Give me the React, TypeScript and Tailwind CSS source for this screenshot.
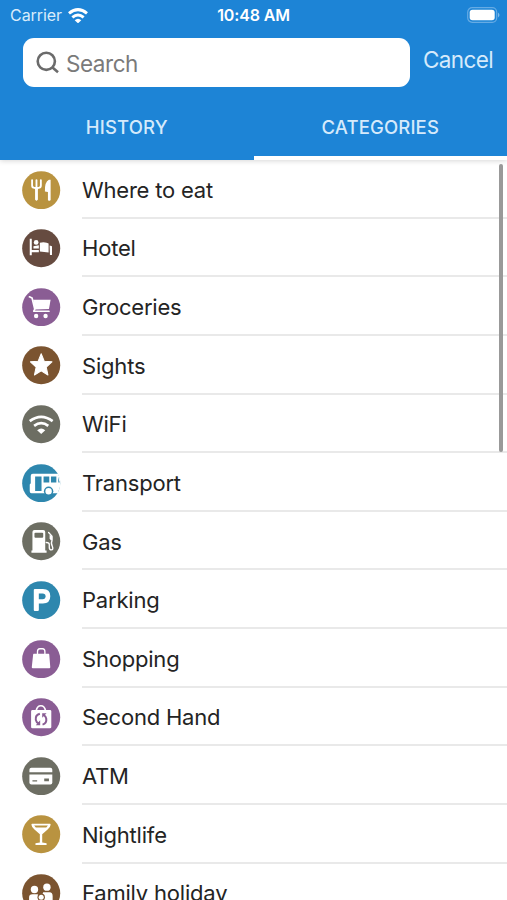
import { useState } from 'react'
import type { ReactNode } from 'react'
import clsx from 'clsx'

interface Category {
  id: string
  label: string
  color: string
  glyph: ReactNode
}

// Glyphs share a 114 x 114 box, the badge circle fills it
const CATEGORIES: Category[] = [
  {
    id: 'eat',
    label: 'Where to eat',
    color: 'text-[#b99340]',
    glyph: (
      <>
        <path d="M30 27v16q0 7 7 7h12q7 0 7-7V27M43 27v58" fill="none" stroke="white" strokeWidth="5.5" strokeLinecap="round" />
        <path d="M36 48h14l-3 8v29q-4 5-8 0V56z" />
        <path d="M85 26v60q-4 5-8 0V62l-9-1q-1-29 12-35z" />
      </>
    ),
  },
  {
    id: 'hotel',
    label: 'Hotel',
    color: 'text-[#664b40]',
    glyph: (
      <>
        <path d="M23 29h6v33H50v7H29v9h-6z" />
        <circle cx="42" cy="40" r="7" />
        <path d="M34 51l16-3v10H34z" />
        <path d="M53 41q11-4 20 0l6 2v27l-26-3z" />
        <path d="M82 49l7 2v26h-6z" />
      </>
    ),
  },
  {
    id: 'groceries',
    label: 'Groceries',
    color: 'text-[#8a5d94]',
    glyph: (
      <>
        <path d="M33 35h52l-5 27-42 2z" />
        <path d="M22 26l8 4 8 33-3 6h45" fill="none" stroke="white" strokeWidth="5" strokeLinecap="round" strokeLinejoin="round" />
        <circle cx="42" cy="83" r="6.5" />
        <circle cx="70" cy="83" r="6.5" />
      </>
    ),
  },
  {
    id: 'sights',
    label: 'Sights',
    color: 'text-[#7b5430]',
    glyph: (
      <path
        d="M57 23l9 22 23 2-17 16 5 23-20-12-20 12 5-23-17-16 23-2z"
        stroke="white"
        strokeWidth="3"
        strokeLinejoin="round"
      />
    ),
  },
  {
    id: 'wifi',
    label: 'WiFi',
    color: 'text-[#6d6e63]',
    glyph: (
      <>
        <path d="M23 48q34-25 68 0M36 62q21-16 42 0" fill="none" stroke="white" strokeWidth="8" />
        <path d="M45 75q12-11 24 0L57 86z" />
      </>
    ),
  },
  {
    id: 'transport',
    label: 'Transport',
    color: 'text-[#2e87ae]',
    glyph: (
      <>
        <path d="M32 29h75q7 12 7 28 0 15-8 30H28q-5 0-5-6V61l3-4V35q0-6 6-6z" />
        <g fill="currentColor">
          <path d="M39 37h19v43H39zM64 37h17v18H64zM86 37h16v18H86zM107 38l5 17h-4z" />
          <circle cx="79" cy="81" r="14" />
        </g>
        <circle cx="79" cy="81" r="9.5" />
      </>
    ),
  },
  {
    id: 'gas',
    label: 'Gas',
    color: 'text-[#6d6e63]',
    glyph: (
      <>
        <path d="M31 30q0-6 6-6h26q6 0 6 6v55h4v6H28v-6h3z" />
        <rect x="37" y="32" width="26" height="15" rx="3" fill="currentColor" />
        <path d="M79 31l10 11v14q-4 7 1 16 4 11-3 11-6 0-6-8v-8q0-6-9-6" fill="none" stroke="white" strokeWidth="4" strokeLinecap="round" strokeLinejoin="round" />
        <path d="M82 38l8 5v11h-5l-3-6z" />
      </>
    ),
  },
  {
    id: 'parking',
    label: 'Parking',
    color: 'text-[#2e87ae]',
    glyph: (
      <>
        <path d="M38 24h24q22 0 22 21T62 67H50v19q0 3-3 3h-9q-3 0-3-3V27q0-3 3-3z" />
        <path d="M50 37h11q9 0 9 8.5t-9 8.5H50z" fill="currentColor" />
      </>
    ),
  },
  {
    id: 'shopping',
    label: 'Shopping',
    color: 'text-[#8a5d94]',
    glyph: (
      <>
        <path d="M46 42v-7q0-9 7-9h8q7 0 7 9v7" fill="none" stroke="white" strokeWidth="4" />
        <path d="M35 41h44q2 0 2 3l3 37q0 3-3 3H32q-3 0-3-3l4-37q0-3 2-3z" />
      </>
    ),
  },
  {
    id: 'second-hand',
    label: 'Second Hand',
    color: 'text-[#8a5d94]',
    glyph: (
      <>
        <path d="M42 38q3-15 14-15t14 15" fill="none" stroke="white" strokeWidth="5" />
        <rect x="27" y="36" width="60" height="54" rx="4" />
        <g fill="none" stroke="currentColor" strokeWidth="6">
          <path d="M53 47q-14 4-12 18 1 7 9 11" />
          <path d="M61 79q13-4 11-18-1-7-8-11" />
        </g>
        <path d="M41 81h13V66zM73 45H60v14z" fill="currentColor" />
      </>
    ),
  },
  {
    id: 'atm',
    label: 'ATM',
    color: 'text-[#6d6e63]',
    glyph: (
      <>
        <path d="M22 45v-7q0-6 6-6h56q6 0 6 6v7z" />
        <path d="M22 52h68v24q0 6-6 6H28q-6 0-6-6z" />
        <path d="M31 69h14v4H31zM66 64h14v8H66z" fill="currentColor" />
      </>
    ),
  },
  {
    id: 'nightlife',
    label: 'Nightlife',
    color: 'text-[#b99340]',
    glyph: (
      <>
        <path d="M30 26h53q2 0 2 3 0 6-9 14L60 57v25l13 2v5H40v-5l13-2V57L37 43q-9-8-9-14 0-3 2-3z" />
        <path d="M36 31h41l-5 6H41z" fill="currentColor" />
      </>
    ),
  },
  {
    id: 'family',
    label: 'Family holiday',
    color: 'text-[#7b5430]',
    glyph: (
      <>
        <circle cx="37" cy="46" r="11" />
        <circle cx="74" cy="39" r="11" />
        <path d="M21 90V69q0-9 10-9h15l11 8 6-14h19q9 0 9 12v24z" />
        <circle cx="57" cy="69" r="11" fill="currentColor" />
        <circle cx="57" cy="69" r="7.5" />
      </>
    ),
  },
]

const TABS = ['HISTORY', 'CATEGORIES']

function StatusBar() {
  return (
    <div className="grid h-[30px] grid-cols-3 items-center pl-[10px] pr-[7px] text-[16px] leading-5 text-white">
      <div className="flex items-center gap-[6px]">
        <span className="tracking-[-0.05px] text-[#d8ecfb]">Carrier</span>
        <svg viewBox="0 0 60 45" className="h-[15px] w-5" fill="none" stroke="white" strokeWidth="9">
          <path d="M3 16q27-22 54 0M13 28q17-14 34 0" />
          <path d="M20 37q10-9 20 0L30 46z" fill="white" stroke="none" />
        </svg>
      </div>
      <span className="pr-[3px] text-center font-semibold tracking-[-0.15px]">10:48 AM</span>
      <svg viewBox="0 0 33 16" className="h-4 w-[33px] justify-self-end">
        <rect x=".7" y=".7" width="29" height="14.6" rx="4.5" fill="none" stroke="#66abe4" strokeWidth="1.2" />
        <rect x="2.7" y="2.7" width="25" height="10.6" rx="2.8" fill="white" />
        <path d="M31 5.5q3 2.5 0 5z" fill="#7db9e9" />
      </svg>
    </div>
  )
}

function SearchBar() {
  return (
    <div className="flex h-[66px] items-start pl-[22.5px] pr-3 pt-[8.4px]">
      <div className="flex h-[48.6px] w-[387.5px] items-center rounded-[11px] bg-white pl-[13px]">
        <svg viewBox="0 0 24 24" className="h-6 w-6 text-[#6b6b6b]" fill="none" stroke="currentColor" strokeWidth="2.6">
          <circle cx="10.3" cy="10.3" r="8.6" />
          <path d="M16.5 16.5l5.5 4.8" />
        </svg>
        <input
          placeholder="Search"
          className="ml-[6.5px] mt-[2px] w-[300px] bg-transparent text-[22.5px] tracking-[-0.45px] outline-none placeholder:text-[#7a7a7a]"
        />
      </div>
      <button className="ml-[13px] mt-[5.5px] whitespace-nowrap text-[22.5px] leading-8 tracking-[-0.6px] text-[#d5eafb]">
        Cancel
      </button>
    </div>
  )
}

export default function App() {
  const [tab, setTab] = useState('CATEGORIES')

  return (
    <div className="relative h-[900px] w-[507px] overflow-hidden bg-white font-['Inter','Liberation_Sans',sans-serif]">
      <header className="relative z-10 h-[160px] bg-[#1d84d6] shadow-[0_1px_5px_rgba(0,0,0,0.16)]">
        <StatusBar />
        <SearchBar />
        <div className="flex h-16">
          {TABS.map(t => (
            <button
              key={t}
              onClick={() => setTab(t)}
              className={clsx(
                'h-full flex-1 border-b-[4px] pt-[4px] text-[18.5px] font-medium tracking-[0.15px] text-[#d5eafb]',
                tab === t ? 'border-white' : 'border-transparent'
              )}
            >
              {t}
            </button>
          ))}
        </div>
      </header>

      <ul>
        {CATEGORIES.map(c => (
          <li key={c.id} className="flex h-[58.64px] items-center pl-[22.3px]">
            <svg viewBox="0 0 114 114" className={clsx('mt-[1px] h-[38.4px] w-[38.4px] shrink-0', c.color)} fill="white">
              <circle cx="57" cy="57" r="56.5" fill="currentColor" />
              {c.glyph}
            </svg>
            <span className="ml-[21.3px] flex h-full flex-1 items-center border-b-2 border-[#e9e9e9] pt-[4px] text-[22px] tracking-[-0.2px] text-[#242424]">
              {c.label}
            </span>
          </li>
        ))}
      </ul>

      {/* scroll indicator */}
      <div className="absolute right-[4px] top-[164px] h-[288px] w-[4px] rounded-full bg-[#999]" />
    </div>
  )
}
